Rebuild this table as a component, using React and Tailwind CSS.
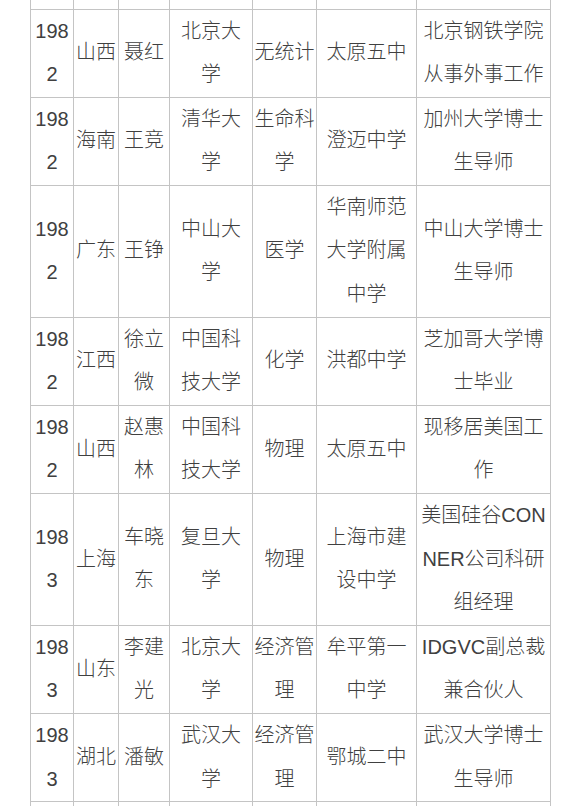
const rows = [
  [["198", "2"], ["山西"], ["聂红"], ["北京大", "学"], ["无统计"], ["太原五中"], ["北京钢铁学院", "从事外事工作"]],
  [["198", "2"], ["海南"], ["王竞"], ["清华大", "学"], ["生命科", "学"], ["澄迈中学"], ["加州大学博士", "生导师"]],
  [["198", "2"], ["广东"], ["王铮"], ["中山大", "学"], ["医学"], ["华南师范", "大学附属", "中学"], ["中山大学博士", "生导师"]],
  [["198", "2"], ["江西"], ["徐立", "微"], ["中国科", "技大学"], ["化学"], ["洪都中学"], ["芝加哥大学博", "士毕业"]],
  [["198", "2"], ["山西"], ["赵惠", "林"], ["中国科", "技大学"], ["物理"], ["太原五中"], ["现移居美国工", "作"]],
  [["198", "3"], ["上海"], ["车晓", "东"], ["复旦大", "学"], ["物理"], ["上海市建", "设中学"], ["美国硅谷CON", "NER公司科研", "组经理"]],
  [["198", "3"], ["山东"], ["李建", "光"], ["北京大", "学"], ["经济管", "理"], ["牟平第一", "中学"], ["IDGVC副总裁", "兼合伙人"]],
  [["198", "3"], ["湖北"], ["潘敏"], ["武汉大", "学"], ["经济管", "理"], ["鄂城二中"], ["武汉大学博士", "生导师"]],
];

const widths = [43, 45, 51, 83, 64, 100, 134];

export default function App() {
  return (
    <div
      className="w-[580px] h-[806px] overflow-hidden bg-white text-[#404040] font-light"
      style={{ fontFamily: '"Liberation Sans", "Noto Sans CJK SC", sans-serif' }}
    >
      <table className="ml-[30px] table-fixed border-collapse w-[521px] text-[20px] leading-[43.6px]">
        <colgroup>
          {widths.map((w, i) => (
            <col key={i} style={{ width: w }} />
          ))}
        </colgroup>
        <tbody>
          <tr>
            {widths.map((_, i) => (
              <td key={i} className="h-[9px] p-0 border border-t-0 border-[#c4c4c4]" />
            ))}
          </tr>
          {rows.map((row, r) => (
            <tr key={r}>
              {row.map((cell, c) => (
                <td
                  key={c}
                  className="p-0 border border-[#c4c4c4] text-center align-middle whitespace-nowrap"
                >
                  {cell.map((line, l) => (
                    <div key={l}>{line}</div>
                  ))}
                </td>
              ))}
            </tr>
          ))}
          <tr>
            {widths.map((_, i) => (
              <td key={i} className="h-[40px] p-0 border border-[#c4c4c4]" />
            ))}
          </tr>
        </tbody>
      </table>
    </div>
  );
}
